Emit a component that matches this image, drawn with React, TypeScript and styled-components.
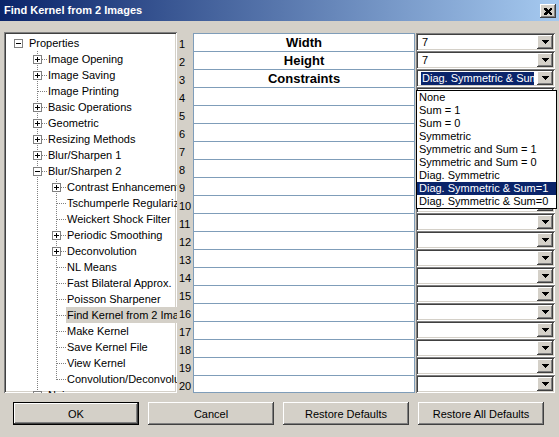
import React from 'react';
import styled, { createGlobalStyle } from 'styled-components';

const FACE = '#d4d0c8';
const NAVY = '#0a246a';

const GlobalStyle = createGlobalStyle`
  html, body {
    margin: 0;
    padding: 0;
    background: ${FACE};
  }
  body {
    width: 559px;
    height: 437px;
    overflow: hidden;
    font-family: "Liberation Sans", Arial, sans-serif;
    font-size: 11px;
    color: #000;
  }
`;

const raised = `
  box-shadow: inset -1px -1px #404040, inset 1px 1px #ffffff, inset -2px -2px #808080;
`;

const sunken = `
  box-shadow: inset 1px 1px #808080, inset -1px -1px #ffffff, inset 2px 2px #404040, inset -2px -2px ${FACE};
`;

type TreeItem = {
    label: string;
    open?: boolean;
    kids?: boolean;
    selected?: boolean;
    children?: Array<TreeItem>;
};

type FlatRow = {
    label: string;
    level: number;
    guides: Array<boolean>;
    last: boolean;
    root: boolean;
    box?: 'plus' | 'minus';
    selected?: boolean;
};

const tree: TreeItem = {
    label: 'Properties',
    open: true,
    children: [
        { label: 'Image Opening', kids: true },
        { label: 'Image Saving', kids: true },
        { label: 'Image Printing' },
        { label: 'Basic Operations', kids: true },
        { label: 'Geometric', kids: true },
        { label: 'Resizing Methods', kids: true },
        { label: 'Blur/Sharpen 1', kids: true },
        {
            label: 'Blur/Sharpen 2',
            open: true,
            children: [
                { label: 'Contrast Enhancement', kids: true },
                { label: 'Tschumperle Regularization' },
                { label: 'Weickert Shock Filter' },
                { label: 'Periodic Smoothing', kids: true },
                { label: 'Deconvolution', kids: true },
                { label: 'NL Means' },
                { label: 'Fast Bilateral Approx.' },
                { label: 'Poisson Sharpener' },
                { label: 'Find Kernel from 2 Images', selected: true },
                { label: 'Make Kernel' },
                { label: 'Save Kernel File' },
                { label: 'View Kernel' },
                { label: 'Convolution/Deconvolution' }
            ]
        },
        { label: 'Noise', kids: true },
        { label: 'Edge Detection', kids: true }
    ]
};

const flatten = (item: TreeItem, level: number, guides: Array<boolean>, last: boolean, root: boolean): Array<FlatRow> => {
    const hasKids = !!item.kids || !!(item.children && item.children.length);
    const row: FlatRow = {
        label: item.label,
        level,
        guides,
        last,
        root,
        box: hasKids ? (item.open ? 'minus' : 'plus') : undefined,
        selected: item.selected
    };
    const out = [row];
    if (item.open && item.children) {
        item.children.forEach((c, i) => {
            out.push(...flatten(c, level + 1, [...guides, !last && !root], i === item.children!.length - 1, false));
        });
    }
    return out;
};

const treeRows = flatten(tree, 0, [], true, true);

const gridLabels = ['Width', 'Height', 'Constraints'];
const gridValues = ['7', '7', 'Diag. Symmetric & Sum=1'];
const constraintOptions = [
    'None',
    'Sum = 1',
    'Sum = 0',
    'Symmetric',
    'Symmetric and Sum = 1',
    'Symmetric and Sum = 0',
    'Diag. Symmetric',
    'Diag. Symmetric & Sum=1',
    'Diag. Symmetric & Sum=0'
];

const TreeConnector = ({ row, guide, own }: { row: FlatRow; guide?: boolean; own?: boolean }): JSX.Element => (
    <svg width="19" height="16" shapeRendering="crispEdges" style={{ display: 'block', flex: 'none' }}>
        {guide && <line x1="9.5" y1="0" x2="9.5" y2="16" stroke="#808080" strokeDasharray="1 1" />}
        {own && !row.root && (
            <>
                <line x1="9.5" y1="0" x2="9.5" y2={row.last ? 9 : 16} stroke="#808080" strokeDasharray="1 1" />
                <line x1="10" y1="8.5" x2="19" y2="8.5" stroke="#808080" strokeDasharray="1 1" />
            </>
        )}
        {own && row.box && (
            <>
                <rect x="5.5" y="4.5" width="8" height="8" fill="#fff" stroke="#808080" />
                <line x1="7" y1="8.5" x2="12" y2="8.5" stroke="#000" />
                {row.box === 'plus' && <line x1="9.5" y1="6" x2="9.5" y2="11" stroke="#000" />}
            </>
        )}
    </svg>
);

const App = (): JSX.Element => {
    return (
        <Window>
            <GlobalStyle />
            <TitleBar>
                <TitleText>Find Kernel from 2 Images</TitleText>
                <CloseButton>
                    <svg width="8" height="7" shapeRendering="crispEdges">
                        <path d="M0 0h2l2 2 2-2h2v1L6 3.5 8 6v1H6L4 5 2 7H0V6l2-2.5L0 1z" fill="#000" />
                    </svg>
                </CloseButton>
            </TitleBar>
            <Body>
                <Main>
                    <TreePanel>
                        {treeRows.map((r, i) => (
                            <TreeRow key={i}>
                                {r.guides.map((g, j) => <TreeConnector key={j} row={r} guide={g} />)}
                                <TreeConnector row={r} own />
                                <TreeLabel $selected={r.selected}>{r.label}</TreeLabel>
                            </TreeRow>
                        ))}
                    </TreePanel>
                    <GridArea>
                        {Array.from({ length: 20 }, (_, i) => (
                            <GridRow key={i}>
                                <RowNumber>{i + 1}</RowNumber>
                                <NameCell $last={i === 19}>{gridLabels[i] || ''}</NameCell>
                                <Combo>
                                    <ComboField>
                                        {gridValues[i] && (
                                            <ComboValue $selected={i === 2}>{gridValues[i]}</ComboValue>
                                        )}
                                    </ComboField>
                                    <ComboButton>
                                        <svg width="7" height="4" shapeRendering="crispEdges">
                                            <path d="M0 0h7v1h-1v1h-1v1h-1v1h-1v-1h-1v-1h-1v-1h-1z" fill="#000" />
                                        </svg>
                                    </ComboButton>
                                    {i === 2 && (
                                        <DropList>
                                            {constraintOptions.map((o) => (
                                                <DropItem key={o} $selected={o === 'Diag. Symmetric & Sum=1'}>{o}</DropItem>
                                            ))}
                                        </DropList>
                                    )}
                                </Combo>
                            </GridRow>
                        ))}
                    </GridArea>
                </Main>
                <ButtonRow>
                    <DialogButton $default>OK</DialogButton>
                    <DialogButton>Cancel</DialogButton>
                    <DialogButton>Restore Defaults</DialogButton>
                    <DialogButton>Restore All Defaults</DialogButton>
                </ButtonRow>
            </Body>
        </Window>
    );
};

export default App;

const Window = styled.div`
    width: 559px;
    height: 437px;
    background: ${FACE};
    display: flex;
    flex-direction: column;
    overflow: hidden;
`;

const TitleBar = styled.div`
    height: 21px;
    flex: none;
    display: flex;
    align-items: flex-start;
    padding: 0 3px 0 4px;
    background: linear-gradient(to right, ${NAVY}, #a6caf0);
`;

const TitleText = styled.div`
    font-weight: bold;
    font-size: 11px;
    line-height: 21px;
    color: #fff;
    white-space: nowrap;
`;

const CloseButton = styled.div`
    margin-left: auto;
    margin-top: 4px;
    width: 16px;
    height: 14px;
    background: ${FACE};
    ${raised}
    display: flex;
    align-items: center;
    justify-content: center;
    padding-right: 1px;
    box-sizing: border-box;
`;

const Body = styled.div`
    flex: 1;
    display: flex;
    flex-direction: column;
    padding: 11px 2px 0 4px;
`;

const Main = styled.div`
    height: 361px;
    display: flex;
`;

const TreePanel = styled.div`
    width: 173px;
    height: 361px;
    flex: none;
    box-sizing: border-box;
    padding: 3px 2px 2px 5px;
    background: #fff;
    ${sunken}
    overflow: hidden;
    white-space: nowrap;
`;

const TreeRow = styled.div`
    height: 16px;
    display: flex;
    align-items: center;
`;

const TreeLabel = styled.span<{ $selected?: boolean }>`
    padding: 0 1px;
    line-height: 16px;
    height: 16px;
    font-size: 11px;
    background: ${(p) => (p.$selected ? FACE : 'transparent')};
`;

const GridArea = styled.div`
    flex: 1;
    padding-top: 1px;
    display: flex;
    flex-direction: column;
`;

const GridRow = styled.div`
    height: 18px;
    display: flex;
`;

const RowNumber = styled.div`
    width: 16px;
    box-sizing: border-box;
    padding-left: 2px;
    display: flex;
    align-items: flex-end;
    font-size: 11px;
    line-height: 13px;
`;

const NameCell = styled.div<{ $last?: boolean }>`
    width: 222px;
    box-sizing: border-box;
    border: 1px solid #7f9db9;
    border-bottom: ${(p) => (p.$last ? '1px solid #7f9db9' : 'none')};
    background: #fff;
    display: flex;
    align-items: center;
    justify-content: center;
    font-weight: bold;
    font-size: 13px;
`;

const Combo = styled.div`
    position: relative;
    width: 139px;
    margin-left: 1px;
    box-sizing: border-box;
    padding: 2px;
    background: #fff;
    ${sunken}
    display: flex;
`;

const ComboField = styled.div`
    flex: 1;
    min-width: 0;
    padding: 0 3px;
    display: flex;
    align-items: center;
    overflow: hidden;
`;

const ComboValue = styled.span<{ $selected?: boolean }>`
    flex: 1;
    height: 13px;
    line-height: 13px;
    padding-left: 1px;
    white-space: nowrap;
    overflow: hidden;
    background: ${(p) => (p.$selected ? NAVY : 'transparent')};
    color: ${(p) => (p.$selected ? '#fff' : '#000')};
`;

const ComboButton = styled.div`
    width: 16px;
    height: 14px;
    flex: none;
    background: ${FACE};
    ${raised}
    display: flex;
    align-items: center;
    justify-content: center;
`;

const DropList = styled.div`
    position: absolute;
    top: 21px;
    left: 0;
    width: 141px;
    box-sizing: border-box;
    border: 1px solid #000;
    background: #fff;
    z-index: 5;
`;

const DropItem = styled.div<{ $selected?: boolean }>`
    height: 13px;
    line-height: 13px;
    padding-left: 2px;
    white-space: nowrap;
    background: ${(p) => (p.$selected ? NAVY : 'transparent')};
    color: ${(p) => (p.$selected ? '#fff' : '#000')};
`;

const ButtonRow = styled.div`
    margin-top: 9px;
    padding-left: 9px;
    display: flex;
    gap: 9px;
`;

const DialogButton = styled.button<{ $default?: boolean }>`
    width: 126px;
    height: 23px;
    box-sizing: border-box;
    padding: 0;
    margin: 0;
    font-family: "Liberation Sans", Arial, sans-serif;
    font-size: 11px;
    color: #000;
    background: ${FACE};
    border: ${(p) => (p.$default ? '1px solid #000' : 'none')};
    ${raised}
    outline: none;
`;
